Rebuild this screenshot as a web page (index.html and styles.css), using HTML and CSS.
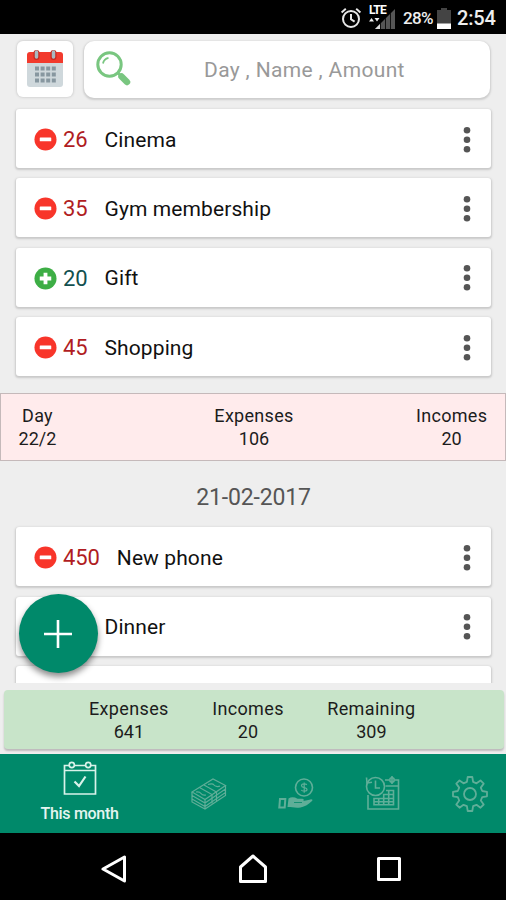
FILE: index.html
```html
<!DOCTYPE html>
<html lang="en">
<head>
    <meta charset="UTF-8">
    <meta name="viewport" content="width=device-width, initial-scale=1.0">
    <title>This month</title>
    <link rel="stylesheet" href="styles.css">
</head>
<body>
    <!-- shared icons -->
    <svg class="defs" width="0" height="0">
        <symbol id="minus" viewBox="0 0 24 24">
            <circle cx="12" cy="12" r="11.5" fill="#f8352a"/>
            <rect x="6" y="9.8" width="12" height="4" rx=".6" fill="#fff"/>
        </symbol>
        <symbol id="plus" viewBox="0 0 24 24">
            <circle cx="12" cy="12" r="11.5" fill="#3dae45"/>
            <path d="M12 6v12M6 12h12" stroke="#fff" stroke-width="4"/>
        </symbol>
        <symbol id="dots" viewBox="0 0 8 28">
            <g fill="#555"><circle cx="4" cy="4.2" r="3.3"/><circle cx="4" cy="13.7" r="3.3"/><circle cx="4" cy="23.2" r="3.3"/></g>
        </symbol>
    </svg>

    <header class="status">
        <svg class="alarm" width="22" height="22" viewBox="0 0 22 22" fill="none" stroke="#e8e8e8" stroke-width="2">
            <circle cx="11" cy="12" r="8"/>
            <path d="M11 7v5.3l3.6 2.4M1.6 5.4l4.2-3.6M20.4 5.4l-4.2-3.6"/>
        </svg>
        <div class="signal">
            <svg width="28" height="26" viewBox="0 0 28 26">
                <path d="M7 24L27 4v20z" fill="#555"/>
                <path d="M12.5 18v6M17.5 13v11M22.5 8v16" stroke="#111" stroke-width="1"/>
                <path d="M7 24l5-5v5z" fill="#ddd"/>
                <path d="M1 16.5l2.5-3.5 2.5 3.5zM6.5 13h5L9 16.5z" fill="#eee"/>
            </svg>
            <span class="lte">LTE</span>
        </div>
        <span class="percent">28%</span>
        <svg class="battery" width="14" height="21" viewBox="0 0 14 21">
            <path d="M4 0h6v2h4v19H0V2h4z" fill="#444"/>
            <path d="M0 15.5h14V21H0z" fill="#fff"/>
        </svg>
        <span class="clock">2:54</span>
    </header>

    <main class="content">
        <div class="tools">
            <button class="calendar">
                <svg width="36" height="38" viewBox="0 0 36 38">
                    <rect x="0" y="3" width="36" height="34" rx="3" fill="#cfd8dc"/>
                    <path d="M0 13V5a3 3 0 0 1 3-3h30a3 3 0 0 1 3 3v8z" fill="#f23a2d"/>
                    <path d="M9.5 3v4M26.5 3v4" stroke="#c62b20" stroke-width="6" stroke-linecap="round"/>
                    <path d="M9.5 2v5M26.5 2v5" stroke="#a9b9c0" stroke-width="3.5" stroke-linecap="round"/>
                    <path d="M8 18.5h21M8 24.5h21M8 30.5h21" stroke="#8797a0" stroke-width="4" stroke-dasharray="4 1.6"/>
                </svg>
            </button>
            <div class="search">
                <svg width="36" height="36" viewBox="0 0 36 36" fill="none" stroke="#79c680">
                    <circle cx="13.500" cy="13.500" r="11.700" stroke-width="3"/>
                    <path d="M7 12.500a7 7 0 0 1 5.500-5.700" stroke-width="1.800"/>
                    <path d="M21.500 21.500l4 4" stroke-width="3"/>
                    <path d="M25.500 25.500l5.500 5.500" stroke-width="6.500" stroke-linecap="round"/>
                </svg>
                <span class="placeholder">Day , Name , Amount</span>
            </div>
        </div>

        <div class="list">
            <div class="card">
                <svg class="kind"><use href="#minus"/></svg>
                <span class="amount">26</span><span class="name">Cinema</span>
                <svg class="more"><use href="#dots"/></svg>
            </div>
            <div class="card">
                <svg class="kind"><use href="#minus"/></svg>
                <span class="amount">35</span><span class="name">Gym membership</span>
                <svg class="more"><use href="#dots"/></svg>
            </div>
            <div class="card">
                <svg class="kind"><use href="#plus"/></svg>
                <span class="amount income">20</span><span class="name">Gift</span>
                <svg class="more"><use href="#dots"/></svg>
            </div>
            <div class="card">
                <svg class="kind"><use href="#minus"/></svg>
                <span class="amount">45</span><span class="name">Shopping</span>
                <svg class="more"><use href="#dots"/></svg>
            </div>
        </div>

        <div class="day-total">
            <div>Day<br><span class="num">22/2</span></div>
            <div>Expenses<br><span class="num">106</span></div>
            <div>Incomes<br><span class="num">20</span></div>
        </div>

        <h2 class="date">21-02-2017</h2>

        <div class="list">
            <div class="card">
                <svg class="kind"><use href="#minus"/></svg>
                <span class="amount">450</span><span class="name">New phone</span>
                <svg class="more"><use href="#dots"/></svg>
            </div>
            <div class="card">
                <span class="name covered">Dinner</span>
                <svg class="more"><use href="#dots"/></svg>
            </div>
            <div class="card"></div>
        </div>
    </main>

    <div class="bottom">
        <button class="fab">
            <svg width="28" height="28" viewBox="0 0 28 28"><path d="M14 0v28M0 14h28" stroke="#fff" stroke-width="2.6"/></svg>
        </button>
        <div class="month-total">
            <div>Expenses<br><span class="num">641</span></div>
            <div>Incomes<br><span class="num">20</span></div>
            <div>Remaining<br><span class="num">309</span></div>
        </div>
    </div>

    <nav class="tabs">
        <a class="tab active">
            <svg width="34" height="36" viewBox="0 0 34 36" fill="none" stroke="#d9f2ea" stroke-width="1.7">
                <path d="M6 4.5H1.500v28.500h31V4.500H28M11.500 4.500h11M1.500 9.500h31"/>
                <circle cx="8.800" cy="4" r="2.600"/><circle cx="25.200" cy="4" r="2.600"/>
                <path d="M11.500 20.500l4.500 4.500L22.500 15.500" stroke-width="2.200"/>
            </svg>
            <span>This month</span>
        </a>
        <a class="tab">
            <svg width="36" height="32" viewBox="0 0 36 32" fill="none" stroke="#5fae98" stroke-width="1.2">
                <path d="M1 14L22 1l12.500 6.500L14 21.500z"/>
                <path d="M1 14v3.500L14 25l20.500-14V7.500M1 17.500V21l13 7.500L34.500 14.500V11M1 21v3l13 7 20.500-13.500v-3M14 21.500V31"/>
                <path d="M8.500 9.500l12.500 7v9M13 7l12.500 7v9"/>
                <path d="M17 6.500c3-1 5-1 6 .5s4 2 6 1M5 14c3-.5 4 0 5 1.500s3 2 5 1.500"/>
            </svg>
        </a>
        <a class="tab">
            <svg width="36" height="31" viewBox="0 0 36 31" fill="none" stroke="#5fae98" stroke-width="1.6">
                <circle cx="26" cy="9.500" r="8.500"/>
                <path d="M28.800 6.800c-1-1.300-5.300-1.300-5.300.9 0 2.500 5.500 1.200 5.500 3.800 0 2.200-4.600 2.200-5.700.5M26.200 4.500v10.300" stroke-width="1.200"/>
                <path d="M2 21h5.300l-.6 8.500H1.300z" stroke-width="2"/>
                <path d="M10.500 20.500c3-1.800 6-1.300 9 .2h5c1.800 0 1.800 2.400 0 2.600h-1c3-.3 6-1.200 9-1.900 1.700-.3 2.700.6 1.500 1.500-3.500 3.200-7 5.600-11.500 6.600-5 .8-9-.5-13-.4z" fill="#5fae98" stroke="none"/>
                <path d="M16 24.500h8" stroke="#00896a" stroke-width=".8"/>
            </svg>
        </a>
        <a class="tab">
            <svg width="36" height="35" viewBox="0 0 36 35" fill="none" stroke="#5fae98" stroke-width="1.6">
                <circle cx="10.500" cy="10.500" r="9"/>
                <path d="M10.500 4.500v7.500h4.500M2 7L1.500 1.500M2 7l5-.8M3 19v14h30.500V4H30M20 4h4M20.500 10h13"/>
                <circle cx="27" cy="4" r="2.200"/><path d="M27 0v8"/>
                <path d="M21 14.500h7.500v14.200H9V22.500h19.500M9 25.700h19.500M18 18.500h10.500M13.700 22v6.500M18.700 18v10.500M23.700 14.500v14"/>
            </svg>
        </a>
        <a class="tab">
            <svg width="36" height="36" viewBox="0 0 36 36" fill="none" stroke="#5fae98" stroke-width="1.8" stroke-linejoin="round">
                <circle cx="18" cy="18" r="6"/>
                <path d="M15.700 1h4.600l.8 4.900 3.400 1.400 4-2.900 3.200 3.200-2.900 4 1.400 3.400 4.800.8v4.500l-4.800.8-1.400 3.400 2.900 4-3.200 3.200-4-2.900-3.400 1.400-.8 4.800h-4.600l-.8-4.800-3.400-1.400-4 2.900-3.200-3.200 2.900-4-1.400-3.400L1 20.300v-4.500l4.800-.8 1.400-3.400-2.900-4 3.200-3.200 4 2.900 3.400-1.400z"/>
            </svg>
        </a>
    </nav>

    <footer class="system">
        <svg width="26" height="28" viewBox="0 0 26 28"><path d="M23.500 2v24L2 14z"/></svg>
        <svg width="30" height="30" viewBox="0 0 30 30"><path d="M2.500 27.500V13L15 2l12.500 11v14.500z"/></svg>
        <svg width="26" height="26" viewBox="0 0 26 26"><path d="M2.500 2.500h21v21h-21z"/></svg>
    </footer>
</body>
</html>
```
FILE: styles.css
```css
* {
    box-sizing: border-box;
}
body {
    margin: 0;
    width: 506px;
    height: 900px;
    display: flex;
    flex-direction: column;
    overflow: hidden;
    background-color: #eee;
    color: #1c1c1c;
    font-family: Roboto, Arial, sans-serif;
}
svg {
    display: block;
    flex: none;
}
button {
    padding: 0;
    border: none;
    display: flex;
    align-items: center;
    justify-content: center;
}
.defs {
    position: absolute;
}

/* status bar */
.status {
    flex: none;
    height: 34px;
    padding: 2px 11px 0 0;
    display: flex;
    align-items: center;
    justify-content: flex-end;
    background: #000;
    color: #eee;
}
.alarm {
    margin-right: 6px;
}
.signal {
    position: relative;
    margin-right: 7px;
}
.lte {
    position: absolute;
    left: 1px;
    top: -1px;
    font-size: 12px;
    font-weight: bold;
    line-height: 12px;
    letter-spacing: -0.8px;
    color: #fff;
}
.percent {
    width: 31px;
    margin-right: 3px;
    font-size: 17px;
    font-weight: 500;
    letter-spacing: -0.7px;
}
.battery {
    margin-right: 6px;
}
.clock {
    width: 38px;
    font-size: 20px;
    font-weight: 500;
    letter-spacing: -0.2px;
}

/* scrolling part */
.content {
    flex: none;
    height: 649px;
    overflow: hidden;
}
.tools {
    display: flex;
    align-items: center;
    gap: 11px;
    height: 58px;
    margin: 6px 16px 11px 17px;
}
.calendar {
    width: 56px;
    height: 56px;
    background: #fff;
    border-radius: 6px;
    box-shadow: 0 0 2px 1px #d6d6d6;
}
.search {
    flex: 1;
    height: 57px;
    display: flex;
    align-items: center;
    padding-left: 12px;
    background: #fff;
    border-radius: 10px;
    box-shadow: 0 1px 2px 1px #cdcdcd;
}
.placeholder {
    margin: 2px 0 0 72px;
    font-size: 21px;
    letter-spacing: 0.35px;
    color: #999;
}
.list {
    display: flex;
    flex-direction: column;
    gap: 10.4px;
    margin: 0 15px 0 16px;
}
.card {
    flex: none;
    height: 59px;
    display: flex;
    align-items: center;
    padding: 2px 20px 0 17.5px;
    background: #fff;
    border-radius: 3px;
    box-shadow: 0 1px 2px 1px #c9c9c9;
}
.kind {
    width: 23px;
    height: 23px;
}
.amount {
    margin: 0 17px 0 6.5px;
    font-size: 22px;
    letter-spacing: -0.1px;
    color: #b01c22;
}
.income {
    color: #12504f;
}
.name {
    font-size: 21px;
    letter-spacing: 0.1px;
    color: #111;
}
.covered {
    margin-left: 71px;
}
.more {
    width: 8px;
    height: 28px;
    margin-left: auto;
}
.day-total {
    height: 68px;
    margin-top: 16.5px;
    padding: 11.5px 18px 0 15px;
    display: grid;
    grid-template-columns: 43px 1fr 71px;
    background: #ffebec;
    border: 1.5px solid #c5b9ba;
    font-size: 18px;
    line-height: 22.5px;
    letter-spacing: 0.3px;
    text-align: center;
    white-space: nowrap;
}
.day-total div:nth-child(2) {
    padding-left: 33px;
}
.num {
    letter-spacing: 0;
}
.date {
    margin: 0;
    height: 66.5px;
    padding: 4px 0 0 1px;
    font-size: 23px;
    font-weight: 400;
    line-height: 66px;
    letter-spacing: -0.15px;
    text-align: center;
    color: #555;
}

/* totals of the month */
.bottom {
    flex: none;
    height: 71px;
    padding: 7px 2px 0 4px;
    position: relative;
}
.month-total {
    height: 59px;
    padding: 8px 0 0 85px;
    display: flex;
    gap: 43.5px;
    background: #c8e4c9;
    border-radius: 4px;
    box-shadow: 0 2px 2px #bdb9bb;
    font-size: 18px;
    line-height: 22.5px;
    letter-spacing: 0.35px;
    text-align: center;
}
.fab {
    position: absolute;
    left: 18.5px;
    top: -89px;
    width: 79px;
    height: 79px;
    border-radius: 50%;
    background: #00896a;
    box-shadow: 0 4px 6px rgba(0, 0, 0, 0.45);
}

/* tab bar */
.tabs {
    flex: none;
    height: 79px;
    display: grid;
    grid-template-columns: 165px 87px 87px 87px 88px;
    background: #00896a;
}
.tab {
    display: flex;
    align-items: center;
    justify-content: center;
}
.active {
    flex-direction: column;
    justify-content: flex-start;
    padding: 7px 6px 0 0;
    font-size: 16px;
    font-weight: 500;
    line-height: 19px;
    letter-spacing: -0.3px;
    color: #e4f5f0;
}
.active span {
    margin-top: 7px;
}

/* android buttons */
.system {
    flex: 1;
    display: grid;
    grid-template-columns: 87px 1fr 87px;
    justify-items: center;
    align-items: center;
    padding: 5px 74px 0 70px;
    background: #000;
}
.system svg:nth-child(2) {
    margin-left: 3px;
}
.system path {
    fill: none;
    stroke: #fff;
    stroke-width: 3;
    stroke-linejoin: round;
}
```
